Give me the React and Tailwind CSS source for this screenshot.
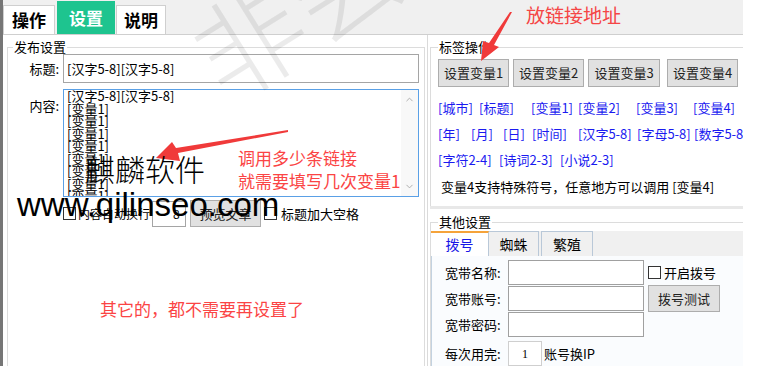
import React from 'react';
import { ChevronUp, ChevronDown } from 'lucide-react';

const Check = () => <span className="inline-block w-[13px] h-[13px] border border-[#333] bg-white shrink-0"></span>;

const Btn = ({ children, className = '' }) => (
  <div className={`flex items-center justify-center bg-[#e1e1e1] border border-[#adadad] text-[13px] text-[#222] ${className}`}>
    {children}
  </div>
);

const tagRows = [
  [['[城市]', 41], ['[标题]', 52], ['[变量1]', 47], ['[变量2]', 58], ['[变量3]', 57], ['[变量4]', 50]],
  [['[年]', 33], ['[月]', 32], ['[日]', 29], ['[时间]', 46], ['[汉字5-8]', 59], ['[字母5-8]', 57], ['[数字5-8', 60]],
  [['[字符2-4]', 61], ['[诗词2-3]', 61], ['[小说2-3]', 70]],
];

const App = () => {
  return (
    <div className="relative w-[770px] h-[379px] overflow-hidden bg-white text-black font-['Noto_Sans_CJK_SC',sans-serif]">
      <div className="w-[743px] h-[366px] flex flex-col border-l-[3px] border-[#767676] overflow-hidden">
        {/* top tabs */}
        <div className="h-[35px] shrink-0 bg-[#f0f0f0] border-b border-[#cfcfcf] flex items-end">
          <div className="w-[52px] h-[29px] bg-white border border-b-0 border-[#cfcfcf] flex items-center justify-center text-[17px] font-bold">操作</div>
          <div className="ml-[2px] w-[58px] h-[33px] bg-[#1ec48f] text-white flex items-center justify-center text-[17px] font-bold">设置</div>
          <div className="ml-[1px] w-[50px] h-[29px] bg-white border border-b-0 border-[#cfcfcf] flex items-center justify-center text-[17px] font-bold">说明</div>
        </div>

        <div className="flex flex-1 min-h-0">
          {/* left */}
          <div className="w-[425px] shrink-0 bg-white pl-[4px] pt-[5px] border-r border-[#dadada]">
            <fieldset className="border border-[#dcdcdc] h-[360px] w-[418px]">
              <legend className="ml-[5px] px-[1px] text-[13px] leading-[14px]">发布设置</legend>
              <div className="flex items-center">
                <span className="w-[52px] text-right text-[13px] pr-[1px]">标题:</span>
                <div className="ml-[3px] w-[356px] h-[29px] border border-[#a5a5a5] flex items-center pl-[3px] text-[13px]">[汉字5-8][汉字5-8]</div>
              </div>
              <div className="flex mt-[6px]">
                <span className="w-[52px] text-right text-[13px] pr-[1px] pt-[7px]">内容:</span>
                <div className="ml-[3px] w-[356px] h-[108px] border border-[#5aa0e6] flex">
                  <div className="flex-1 overflow-hidden pl-[3px] text-[13px] leading-[12.5px]">
                    <div>[汉字5-8][汉字5-8]</div>
                    {Array.from({ length: 9 }).map((_, i) => (
                      <div key={i}>[变量1]</div>
                    ))}
                  </div>
                  <div className="w-[17px] flex flex-col justify-between items-center py-[4px] bg-[#f8f8f8]">
                    <ChevronUp size={11} className="text-[#a8a8a8]" />
                    <ChevronDown size={11} className="text-[#a8a8a8]" />
                  </div>
                </div>
              </div>
              <div className="flex items-center mt-[3px] h-[27px] text-[12px]">
                <div className="ml-[55px] flex items-center gap-[2px]">
                  <Check />
                  <span className="w-[72px]">内容自动换行</span>
                </div>
                <div className="ml-[2px] w-[34px] h-[26px] border border-[#a5a5a5] flex items-center pl-[20px] text-[12px]">8</div>
                <Btn className="ml-[4px] w-[71px] h-[27px]">预览文章</Btn>
                <div className="ml-[3px] flex items-center gap-[4px] text-[13px]">
                  <Check />
                  <span>标题加大空格</span>
                </div>
              </div>
            </fieldset>
          </div>

          {/* right */}
          <div className="flex-1 bg-white pt-[5px] pl-[2px]">
            <fieldset className="border-t border-l border-[#dcdcdc] h-[166px]">
              <legend className="ml-[7px] px-[1px] text-[13px] leading-[14px]">标签操作</legend>
              <div className="flex pl-[7px] mt-[5px]">
                <Btn className="w-[71px] h-[28px]">设置变量1</Btn>
                <Btn className="ml-[4px] w-[71px] h-[28px]">设置变量2</Btn>
                <Btn className="ml-[4px] w-[72px] h-[28px]">设置变量3</Btn>
                <Btn className="ml-[7px] w-[71px] h-[28px]">设置变量4</Btn>
              </div>
              <div className="mt-[8px] pl-[7px] text-[13px] text-[#1a1af0]">
                {tagRows.map((row, ri) => (
                  <div key={ri} className="flex h-[26px] items-center whitespace-nowrap">
                    {row.map(([t, w]) => (
                      <span key={t} className="shrink-0" style={{ width: w }}>{t}</span>
                    ))}
                  </div>
                ))}
              </div>
              <div className="pl-[10px] h-[28px] flex items-center text-[13px] whitespace-nowrap">变量4支持特殊符号，任意地方可以调用 [变量4]</div>
            </fieldset>
            <div className="h-[3px] bg-[#e8e8e8]"></div>
            <fieldset className="mt-[6px] border-t border-l border-[#dcdcdc] h-[160px]">
              <legend className="ml-[7px] px-[1px] text-[13px] leading-[14px]">其他设置</legend>
              <div className="mt-[2px] flex h-[25px] bg-[#f0f0f0] text-[14px]">
                <div className="w-[58px] bg-white border-t-2 border-t-[#f5a33a] border-r border-[#b9c8d8] flex items-center justify-center text-[#1818e6]">拨号</div>
                <div className="w-[50px] border border-b-0 border-l-0 border-[#b9c8d8] flex items-center justify-center">蜘蛛</div>
                <div className="ml-[2px] w-[52px] border border-b-0 border-[#b9c8d8] flex items-center justify-center">繁殖</div>
              </div>
              <div className="bg-[#fafcfe] border-l border-[#c3d2e0] h-[120px] pt-[4px] pl-[13px] text-[13px]">
                <div className="flex">
                  <div>
                    {['宽带名称:', '宽带账号:', '宽带密码:'].map((l) => (
                      <div key={l} className="flex items-center mb-[1px]">
                        <span className="w-[63px]">{l}</span>
                        <div className="w-[136px] h-[25px] border border-[#a0a0a0] bg-white"></div>
                      </div>
                    ))}
                  </div>
                  <div className="ml-[4px]">
                    <div className="h-[25px] flex items-center gap-[3px]">
                      <Check />
                      <span>开启拨号</span>
                    </div>
                    <Btn className="w-[72px] h-[27px]">拨号测试</Btn>
                  </div>
                </div>
                <div className="flex items-center mt-[3px]">
                  <span className="w-[63px]">每次用完:</span>
                  <div className="w-[34px] h-[25px] border border-[#cfcfcf] bg-white flex items-center justify-center text-[12px] font-['Liberation_Serif',serif]">1</div>
                  <span className="ml-[2px]">账号换IP</span>
                </div>
              </div>
            </fieldset>
          </div>
        </div>
      </div>

      {/* watermark */}
      <div className="absolute left-[175px] top-[-78px] text-[110px] leading-none font-light text-[rgba(0,0,0,0.08)] rotate-[-32deg] pointer-events-none whitespace-nowrap">非会员</div>

      {/* annotations */}
      <svg className="absolute left-0 top-0 pointer-events-none" width="770" height="379">
        <polygon points="288,130 176,148 172,142 156,158 180,161 178,153 288,132" fill="#f03a3a" />
        <polygon points="512,12 494,45 499,47 481,61 483,41 489,43 510,12" fill="#f03a3a" />
      </svg>
      <div className="absolute left-[526px] top-[3px] text-[19px] leading-[24px] text-[#f54545] whitespace-nowrap">放链接地址</div>
      <div className="absolute left-[238px] top-[146px] text-[17px] leading-[23px] text-[#fb4444] whitespace-nowrap">
        <div>调用多少条链接</div>
        <div>就需要填写几次变量1</div>
      </div>
      <div className="absolute left-[100px] top-[297px] text-[17px] leading-[24px] text-[#fb4444] whitespace-nowrap">其它的，都不需要再设置了</div>
      <div className="absolute left-[85px] top-[150px] text-[30px] leading-[36px] font-light whitespace-nowrap">麒麟软件</div>
      <div className="absolute left-[17px] top-[186px] text-[33px] leading-[38px] font-['Liberation_Sans',sans-serif] whitespace-nowrap">www.qilinseo.com</div>
    </div>
  );
};

export default App;
